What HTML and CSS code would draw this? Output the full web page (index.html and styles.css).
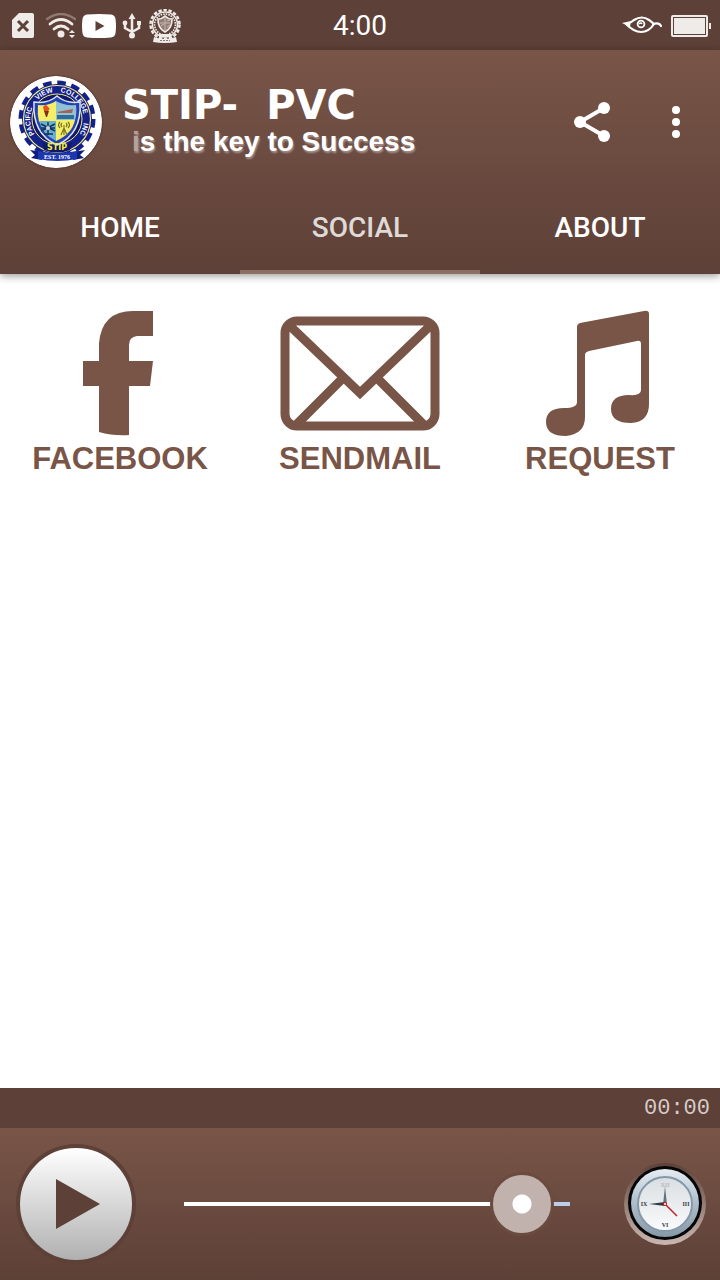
FILE: index.html
```html
<!DOCTYPE html>
<html lang="en">
<head>
  <meta charset="UTF-8" />
  <meta name="viewport" content="width=device-width, initial-scale=1" />
  <title>STIP- PVC</title>
  <link rel="stylesheet" href="styles.css">
</head>
<body>
  <div class="status-bar">
    <div class="status-icons">
      <svg width="22" height="26" viewBox="0 0 22 26">
        <path d="M7 0h13a2 2 0 0 1 2 2v21a2 2 0 0 1-2 2H2a2 2 0 0 1-2-2V7z" fill="#efebe9"/>
        <path d="M6 8l10 10M16 8L6 18" stroke="#5d4037" stroke-width="3"/>
      </svg>
      <svg class="wifi" width="30" height="26" viewBox="0 0 30 26" fill="none" stroke-linecap="round">
        <path d="M1 6Q15-4 29 6" stroke="#8f7971" stroke-width="2.5"/>
        <path d="M4 11Q15 2 26 11" stroke="#efebe9" stroke-width="2.8"/>
        <path d="M8 16Q15 10 22 16" stroke="#efebe9" stroke-width="2.8"/>
        <circle cx="15" cy="21" r="3.5" fill="#efebe9"/>
        <path d="M23 20l3-3 3 3zM23 22l3 3 3-3z" fill="#efebe9"/>
      </svg>
      <svg width="34" height="24" viewBox="0 0 34 24">
        <path d="M5 .5Q17-.5 29 .5Q33 1 33.500 5Q34.500 12 33.500 19Q33 23 29 23.500Q17 24.500 5 23.500Q1 23 .5 19Q-.5 12 .5 5Q1 1 5 .5z" fill="#fff"/>
        <path d="M13.500 7v10l9-5z" fill="#5d4037"/>
      </svg>
      <svg width="20" height="26" viewBox="0 0 20 26" fill="none" stroke="#efebe9" stroke-width="2.500">
        <path d="M10 22V5M10 19L3 15V10M10 19L17 15V11"/>
        <path d="M6.500 6L10 0l3.500 6zM15 8h4v4h-4z" fill="#efebe9" stroke="none"/>
        <circle cx="3" cy="10" r="2.400" fill="#efebe9" stroke="none"/>
        <circle cx="10" cy="22.500" r="3" fill="#efebe9" stroke="none"/>
      </svg>
      <svg width="34" height="34" viewBox="0 0 34 34" fill="none" stroke="#efebe9">
        <circle cx="17" cy="15.500" r="14.500" stroke-width="2.500" stroke-dasharray="3.400 1.700"/>
        <circle cx="17" cy="15.500" r="12.500" stroke-width="1.500"/>
        <circle cx="17" cy="15.500" r="10.400" stroke-width="1.600" stroke-dasharray="1.600 1"/>
        <path d="M10 10Q14 10 17 7Q20 10 24 10Q24.500 19 17 23Q9.500 19 10 10z" fill="#927c74" stroke-width="1.600"/>
        <path d="M17 9v12M12 14h10M13 17l3-2M19 12l3-1M19 18l3-2" stroke="#c8bbb6"/>
        <path d="M6 28Q17 32 28 28L29 33Q17 35 5 33z" fill="#efebe9" stroke="none"/>
        <path d="M11 25h12v3H11z" fill="#efebe9" stroke="none"/>
        <path d="M12 31.500h10" stroke="#8f7971" stroke-dasharray="2 1"/>
      </svg>
    </div>
    <div class="status-time">4:00</div>
    <div class="status-right">
      <svg width="40" height="20" viewBox="0 0 40 20" fill="none" stroke="#fff">
        <path d="M4 8Q9 7 12 4Q20-1 27 4L32 8Q27 16 19 16Q12 16 4 8" stroke-width="2.200"/>
        <path d="M0 7L9 5L8 11z" fill="#fff" stroke="none"/>
        <path d="M31 8Q37 6 39 10" stroke-width="2.200" stroke-linecap="round"/>
        <circle cx="19" cy="8" r="3.400" stroke-width="1.800"/>
        <path d="M17 8Q19 6 20 8" stroke-width="1.500"/>
      </svg>
      <svg width="40" height="22" viewBox="0 0 40 22">
        <rect x="1" y="1" width="35" height="20" rx="1" fill="none" stroke="#efebe9" stroke-width="2"/>
        <rect x="3" y="3" width="31" height="16" fill="#efebe9"/>
        <rect x="2.500" y="2.500" width="32" height="17" fill="none" stroke="#5d4037"/>
        <rect x="38" y="8" width="2" height="6" fill="#efebe9"/>
      </svg>
    </div>
  </div>

  <header class="header">
    <div class="toolbar">
      <svg class="logo" width="92" height="92" viewBox="0 0 92 92">
        <defs>
          <path id="ring" d="M27.900 62.100A27 27 0 1 1 66.100 62.100"/>
        </defs>
        <circle cx="46" cy="46" r="46" fill="#fff"/>
        <circle cx="47" cy="43" r="36" fill="none" stroke="#14208c" stroke-width="5" stroke-dasharray="8.500 5.637"/>
        <circle cx="47" cy="43" r="35" fill="#14208c"/>
        <circle cx="47" cy="43" r="33.500" fill="none" stroke="#f1ec72" stroke-width="1.200"/>
        <circle cx="47" cy="43" r="25" fill="#10186e" stroke="#f1ec72" stroke-width="1"/>
        <g class="ring-text">
          <text><textPath href="#ring" startOffset="15%">PACIFIC</textPath></text>
          <text><textPath href="#ring" startOffset="40%">VIEW</textPath></text>
          <text><textPath href="#ring" startOffset="66%">COLLEGE</textPath></text>
          <text><textPath href="#ring" startOffset="91%">INC</textPath></text>
        </g>
        <path d="M24 26Q38 28 47 20Q56 28 70 26Q72 58 47 69Q22 58 24 26z" fill="#2441b4" stroke="#dbe2ee" stroke-width="1.500"/>
        <path d="M28 29Q39 30 46 25V46H29Q27 38 28 29z" fill="#f4ef66"/>
        <path d="M46 25Q54 30 66 29Q67 38 65 44H46z" fill="#8fc3d4"/>
        <path d="M29 45H46V65Q32 58 29 45z" fill="#6ab0d0"/>
        <path d="M46 44H65Q62 58 46 65z" fill="#f4ef66"/>
        <path d="M33 31Q36 27 38 31Q41 32 38 35H34z" fill="#e5521d"/>
        <path d="M34 35h5l-2 6h-1z" fill="#813018"/>
        <path d="M47 36l16-3-1 4H48z" fill="#a95e59"/>
        <path d="M47 39h17v4H47z" fill="#2f6e94"/>
        <path d="M31 48l14 7M31 55l14-7M38 46v13M31 52h14M34 58h9" stroke="#173457" stroke-width="1.500"/>
        <circle cx="38" cy="52" r="2" fill="#c9dce5"/>
        <path d="M54 49v10M51 59l3-7 3 7M50 46q-3 3 0 6M58 46q3 3 0 6M52 47q-2 2 0 4M56 47q2 2 0 4" fill="none" stroke="#7c762b" stroke-width="1.200"/>
        <path d="M32 66Q47 74 62 66L60 74Q47 79 34 74z" fill="#10186e"/>
        <text class="logo-name" x="47" y="74">STIP</text>
        <path d="M20 74L32 76V84L21 82L25 79zM75 74L63 76V84L74 82L70 79z" fill="#0d1c80"/>
        <path d="M28 75Q47 79 67 75V83Q47 87 28 83z" fill="#1c37ad"/>
        <text class="logo-year" x="47" y="83">EST. 1976</text>
      </svg>
      <div class="titles">
        <h1 class="title"><span>STIP-</span> <span>PVC</span></h1>
        <p class="subtitle"><span class="faded">i</span>s the key to Success</p>
      </div>
      <button class="icon-button" type="button" aria-label="Share">
        <svg width="48" height="48" viewBox="0 0 48 48" fill="#fff">
          <path d="M36 10L12 24l24 14" fill="none" stroke="#fff" stroke-width="4"/>
          <circle cx="36" cy="10" r="6"/>
          <circle cx="12" cy="24" r="6"/>
          <circle cx="36" cy="38" r="6"/>
        </svg>
      </button>
      <button class="icon-button" type="button" aria-label="More options">
        <svg width="48" height="48" viewBox="0 0 48 48" fill="#fff">
          <circle cx="24" cy="12" r="4"/>
          <circle cx="24" cy="24" r="4"/>
          <circle cx="24" cy="36" r="4"/>
        </svg>
      </button>
    </div>
    <nav class="tabs">
      <a class="tab" href="#home">HOME</a>
      <a class="tab active" href="#social">SOCIAL</a>
      <a class="tab" href="#about">ABOUT</a>
    </nav>
  </header>

  <main class="social">
    <a class="social-link" href="#facebook">
      <svg width="160" height="130" viewBox="0 0 160 130" fill="#795548">
        <path d="M113 1V26H97Q89 27 89 35V51H113L110 76H89V125Q73 126 59 122V76H43V51H59V33Q62 1 93 1z"/>
      </svg>
      FACEBOOK
    </a>
    <a class="social-link" href="#sendmail">
      <svg width="160" height="130" viewBox="0 0 160 130" fill="none" stroke="#795548" stroke-width="9">
        <rect x="5" y="11" width="150" height="105" rx="12"/>
        <path d="M9 15L80 83L151 15M15 116L62 69M145 116L98 69"/>
      </svg>
      SENDMAIL
    </a>
    <a class="social-link" href="#request">
      <svg width="160" height="130" viewBox="-20 0 160 130" fill="#795548">
        <path d="M37 17Q37 14 40 13L104 1Q109 0 109 4V94Q109 112 91 113Q71 113 71 99Q71 85 89 85Q101 86 101 80V34Q101 30 97 31L49 41Q45 42 45 45V107Q45 124 26 126Q6 126 6 112Q6 98 24 98Q37 98 37 92z"/>
      </svg>
      REQUEST
    </a>
  </main>

  <footer class="footer">
    <div class="elapsed">00:00</div>
    <div class="player">
      <button class="play" type="button" aria-label="Play">
        <svg width="44" height="52" viewBox="0 0 44 52"><path d="M0 1L44 26L0 51z" fill="#5d4037"/></svg>
      </button>
      <input class="volume" type="range" min="0" max="100" value="95" aria-label="Volume">
      <button class="icon-button" type="button" aria-label="Sleep timer">
        <svg class="timer" width="84" height="84" viewBox="0 0 84 84">
          <defs>
            <linearGradient id="rim" x2="0" y2="1"><stop stop-color="#5d4037"/><stop offset="1" stop-color="#cbb8b2"/></linearGradient>
            <linearGradient id="steel" x2="0" y2="1"><stop stop-color="#e6edf3"/><stop offset=".5" stop-color="#aebdcb"/><stop offset="1" stop-color="#8799a7"/></linearGradient>
            <linearGradient id="face" x2="0" y2="1"><stop stop-color="#d9dee2"/><stop offset="1" stop-color="#fafbfc"/></linearGradient>
          </defs>
          <circle cx="42" cy="42" r="41" fill="url(#rim)"/>
          <circle cx="42" cy="41" r="37" fill="#050607"/>
          <circle cx="42" cy="41" r="34" fill="url(#steel)"/>
          <circle cx="42" cy="42" r="27" fill="url(#face)" stroke="#8598a9" stroke-width="2"/>
          <text class="pale" x="42" y="25">XII</text>
          <text x="63" y="44">III</text>
          <text x="42" y="65">VI</text>
          <text x="21" y="44">IX</text>
          <path d="M42 24l2 19h-4z" fill="#65717a"/>
          <path d="M26 42l16-2v4z" fill="#333b42"/>
          <path d="M42 42l12 12" stroke="#c52024" stroke-width="1.500"/>
          <circle cx="42" cy="42" r="2" fill="#c52024"/>
          <circle cx="42" cy="42" r="1" fill="#fff"/>
        </svg>
      </button>
    </div>
  </footer>
</body>
</html>
```
FILE: styles.css
```css
* {
  box-sizing: border-box;
}
body {
  display: flex;
  flex-direction: column;
  min-height: 100vh;
  margin: 0;
  background: #fff;
  font-family: Roboto, sans-serif;
}
svg {
  display: block;
}
button {
  padding: 0;
  border: 0;
  background: none;
}

/* status bar */
.status-bar {
  display: grid;
  grid-template-columns: 1fr auto 1fr;
  align-items: center;
  height: 50px;
  padding: 2px 9px 0 12px;
  background: #5d4037;
  color: #fff;
}
.status-icons,
.status-right {
  display: flex;
  align-items: center;
  gap: 6px;
}
.wifi {
  margin-left: 6px;
}
.status-right {
  justify-content: flex-end;
  gap: 9px;
}
.status-time {
  padding-right: 3px;
  font-size: 28px;
  line-height: 32px;
}

/* header */
.header {
  background: linear-gradient(#795548, #5d4037);
  box-shadow: 0 2px 8px rgba(0, 0, 0, 0.4);
}
.toolbar {
  display: flex;
  align-items: center;
  padding: 16px 20px 0 10px;
  height: 128px;
  color: #fff;
}
.logo {
  border-radius: 50%;
  box-shadow: 0 0 2px #3e2723;
}
.ring-text {
  fill: #fff;
  font: bold 7px "Liberation Sans", Arial, sans-serif;
  text-anchor: middle;
}
.logo-name {
  fill: #f4ef30;
  font: bold 8px "DejaVu Sans", sans-serif;
  text-anchor: middle;
}
.logo-year {
  fill: #fff;
  font: bold 6px "Liberation Serif", serif;
  text-anchor: middle;
}
.titles {
  flex: 1;
  padding: 4px 0 0 20px;
}
.title {
  display: flex;
  gap: 28px;
  margin: 0;
  font: bold 40px/36px "DejaVu Sans", Verdana, sans-serif;
}
.subtitle {
  margin: 0;
  padding-left: 10px;
  font: bold 28px/38px "Liberation Sans", Arial, sans-serif;
  text-shadow: 1px 2px 2px rgba(255, 255, 255, 0.4);
  white-space: nowrap;
}
.faded {
  color: #b5a29b;
}
.icon-button + .icon-button {
  margin-left: 36px;
}

/* tabs */
.tabs {
  display: grid;
  grid-template-columns: repeat(3, 1fr);
}
.tab {
  height: 96px;
  border-bottom: 4px solid transparent;
  color: #fff;
  font-size: 28px;
  font-weight: 500;
  line-height: 100px;
  text-align: center;
  text-decoration: none;
}
.tab.active {
  border-color: #8d6e63;
  color: #dfd9d7;
}

/* social links */
.social {
  flex: 1;
  display: grid;
  grid-template-columns: repeat(3, 1fr);
  align-content: start;
  padding-top: 36px;
}
.social-link {
  display: flex;
  flex-direction: column;
  align-items: center;
  color: #795548;
  font: bold 31px/38px "Liberation Sans", Arial, sans-serif;
  text-decoration: none;
}

/* player */
.elapsed {
  height: 40px;
  padding-right: 10px;
  background: #5d4037;
  color: #d7ccc8;
  font: 22px/42px "Liberation Mono", monospace;
  text-align: right;
}
.player {
  display: flex;
  align-items: center;
  height: 152px;
  padding: 0 13px 0 18px;
  background: linear-gradient(#795548, #5d4037);
}
.play {
  display: flex;
  align-items: center;
  justify-content: center;
  width: 116px;
  height: 116px;
  padding-left: 4px;
  border: 2px solid #5d4037;
  border-radius: 50%;
  background: linear-gradient(#fff, #b0b0b0);
  box-shadow: 0 0 0 2px #5d4037;
}
.volume {
  flex: 1;
  min-width: 0;
  height: 64px;
  margin: 0 53px 0 50px;
  appearance: none;
  background: none;
}
.volume::-webkit-slider-runnable-track {
  height: 4px;
  background: linear-gradient(to right, #fff 88%, #bbcdea 88%);
}
.volume::-webkit-slider-thumb {
  appearance: none;
  width: 64px;
  height: 64px;
  margin-top: -30px;
  border: 3px solid #6b4a3f;
  border-radius: 50%;
  background: radial-gradient(circle, #fff 9px, #c1b2ad 10px);
}
.timer text {
  fill: #34393d;
  font: bold 6px "Liberation Serif", serif;
  text-anchor: middle;
}
.timer .pale {
  fill: #b4b9bd;
}
```
